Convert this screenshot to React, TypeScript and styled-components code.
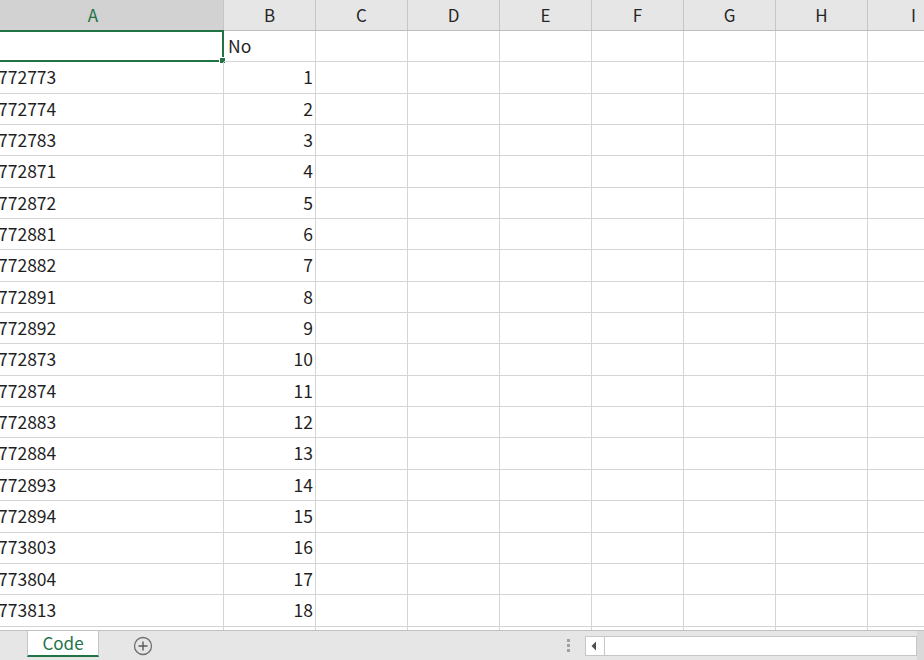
import React from "react";
import styled, { createGlobalStyle } from "styled-components";

const GlobalStyle = createGlobalStyle`
  html, body {
    margin: 0;
    padding: 0;
    overflow: hidden;
    background: #ffffff;
  }

  body {
    font-family: "Noto Sans CJK JP", "Noto Sans", sans-serif;
    color: #1f1f1f;
  }
`;

const COLUMNS = ["A", "B", "C", "D", "E", "F", "G", "H", "I"];

const ROWS: Array<[string, number]> = [
  ["772773", 1],
  ["772774", 2],
  ["772783", 3],
  ["772871", 4],
  ["772872", 5],
  ["772881", 6],
  ["772882", 7],
  ["772891", 8],
  ["772892", 9],
  ["772873", 10],
  ["772874", 11],
  ["772883", 12],
  ["772884", 13],
  ["772893", 14],
  ["772894", 15],
  ["773803", 16],
  ["773804", 17],
  ["773813", 18],
];

const GREEN = "#217346";
const GRID_LINE = "#d4d4d4";
const TRACK = `261px repeat(${COLUMNS.length - 1}, 92px)`;

export default function App() {
  return (
    <>
      <GlobalStyle />
      <Sheet>
        <GridArea>
          {/* sheet is scrolled right: column A starts 37px off screen */}
          <GridScroll>
            <HeaderRow>
              {COLUMNS.map((col) => (
                <ColumnHeader key={col} selected={col === "A"}>
                  {col}
                </ColumnHeader>
              ))}
            </HeaderRow>

            <Row>
              <CodeCell>
                <Selection>
                  <FillHandle />
                </Selection>
              </CodeCell>
              <LabelCell>No</LabelCell>
              {COLUMNS.slice(2).map((col) => (
                <Cell key={col} />
              ))}
            </Row>

            {ROWS.map(([code, no]) => (
              <Row key={code}>
                <CodeCell>{code}</CodeCell>
                <NumberCell>{no}</NumberCell>
                {COLUMNS.slice(2).map((col) => (
                  <Cell key={col} />
                ))}
              </Row>
            ))}

            <Row>
              {COLUMNS.map((col) => (
                <Cell key={col} />
              ))}
            </Row>
          </GridScroll>
        </GridArea>

        <TabBar>
          <TabLead />
          <SheetTab>Code</SheetTab>
          <AddSheet aria-label="New sheet">
            <svg width="20" height="20" viewBox="0 0 20 20">
              <circle cx="10" cy="10" r="8.5" fill="none" stroke="#6d6d6d" strokeWidth="1.3" />
              <path d="M10 5.5v9M5.5 10h9" stroke="#5a5a5a" strokeWidth="1.4" />
            </svg>
          </AddSheet>
          <Spacer />
          <Grip>
            <GripDot />
            <GripDot />
            <GripDot />
          </Grip>
          <HScroll>
            <ScrollButton>
              <svg width="6" height="10" viewBox="0 0 6 10">
                <path d="M5 0.5v9L0.5 5z" fill="#505050" />
              </svg>
            </ScrollButton>
            <ScrollTrack />
          </HScroll>
          <TabTail />
        </TabBar>
      </Sheet>
    </>
  );
}

const Sheet = styled.div`
  width: 924px;
  height: 660px;
  display: flex;
  flex-direction: column;
  overflow: hidden;
`;

const GridArea = styled.div`
  height: 630px;
  overflow: hidden;
  flex-shrink: 0;
`;

const GridScroll = styled.div`
  margin-left: -37px;
  width: max-content;
`;

const HeaderRow = styled.div`
  display: grid;
  grid-template-columns: ${TRACK};
  height: 31px;
  background: #e6e6e6;
  border-bottom: 1px solid #bcbcbc;
  box-sizing: border-box;
`;

const ColumnHeader = styled.div<{ selected?: boolean }>`
  display: flex;
  align-items: center;
  justify-content: center;
  padding-bottom: 2px;
  border-right: 1px solid #c6c6c6;
  background: ${({ selected }) => (selected ? "#d2d2d2" : "#e6e6e6")};
  color: ${({ selected }) => (selected ? GREEN : "#262626")};
  font-size: 17px;
`;

const Row = styled.div`
  display: grid;
  grid-template-columns: ${TRACK};
  height: 31.35px;
`;

const Cell = styled.div`
  position: relative;
  box-sizing: border-box;
  border-right: 1px solid ${GRID_LINE};
  border-bottom: 1px solid ${GRID_LINE};
  display: flex;
  align-items: center;
  font-size: 17.5px;
  line-height: 1;
  white-space: nowrap;
  padding: 0 4px 1px;
`;

const CodeCell = styled(Cell)`
  padding-left: 35px;
`;

const LabelCell = styled(Cell)`
  padding-left: 4px;
`;

const NumberCell = styled(Cell)`
  justify-content: flex-end;
  padding-right: 2px;
`;

const Selection = styled.div`
  position: absolute;
  top: -1px;
  left: -1px;
  right: -1px;
  bottom: -1px;
  border: 2px solid ${GREEN};
  pointer-events: none;
`;

const FillHandle = styled.div`
  position: absolute;
  right: -4px;
  bottom: -4px;
  width: 5px;
  height: 5px;
  background: ${GREEN};
  border: 1px solid #ffffff;
`;

const TabBar = styled.div`
  flex: 1;
  display: flex;
  align-items: flex-start;
  background: #e6e6e6;
  border-top: 1px solid #c2c2c2;
`;

const TabLead = styled.div`
  width: 27px;
`;

const SheetTab = styled.div`
  width: 72px;
  height: 26px;
  box-sizing: border-box;
  background: #ffffff;
  border-left: 1px solid #c6c6c6;
  border-right: 1px solid #c6c6c6;
  border-bottom: 2px solid ${GREEN};
  color: ${GREEN};
  font-size: 17px;
  display: flex;
  align-items: center;
  justify-content: center;
  padding-bottom: 2px;
`;

const AddSheet = styled.div`
  margin-left: 34px;
  margin-top: 5px;
  width: 20px;
  height: 20px;
  display: flex;
`;

const Spacer = styled.div`
  flex: 1;
`;

const Grip = styled.div`
  display: flex;
  flex-direction: column;
  gap: 2px;
  margin-top: 8px;
  margin-right: 15px;
`;

const GripDot = styled.div`
  width: 3px;
  height: 3px;
  background: #a0a0a0;
`;

const HScroll = styled.div`
  margin-top: 5px;
  width: 332px;
  height: 20px;
  box-sizing: border-box;
  display: flex;
  background: #ffffff;
  border: 1px solid #c6c6c6;
`;

const ScrollButton = styled.div`
  width: 19px;
  border-right: 1px solid #c6c6c6;
  display: flex;
  align-items: center;
  justify-content: center;
  padding-right: 2px;
  box-sizing: border-box;
`;

const ScrollTrack = styled.div`
  flex: 1;
`;

const TabTail = styled.div`
  width: 7px;
  height: 100%;
  background: #d9d9d9;
`;
